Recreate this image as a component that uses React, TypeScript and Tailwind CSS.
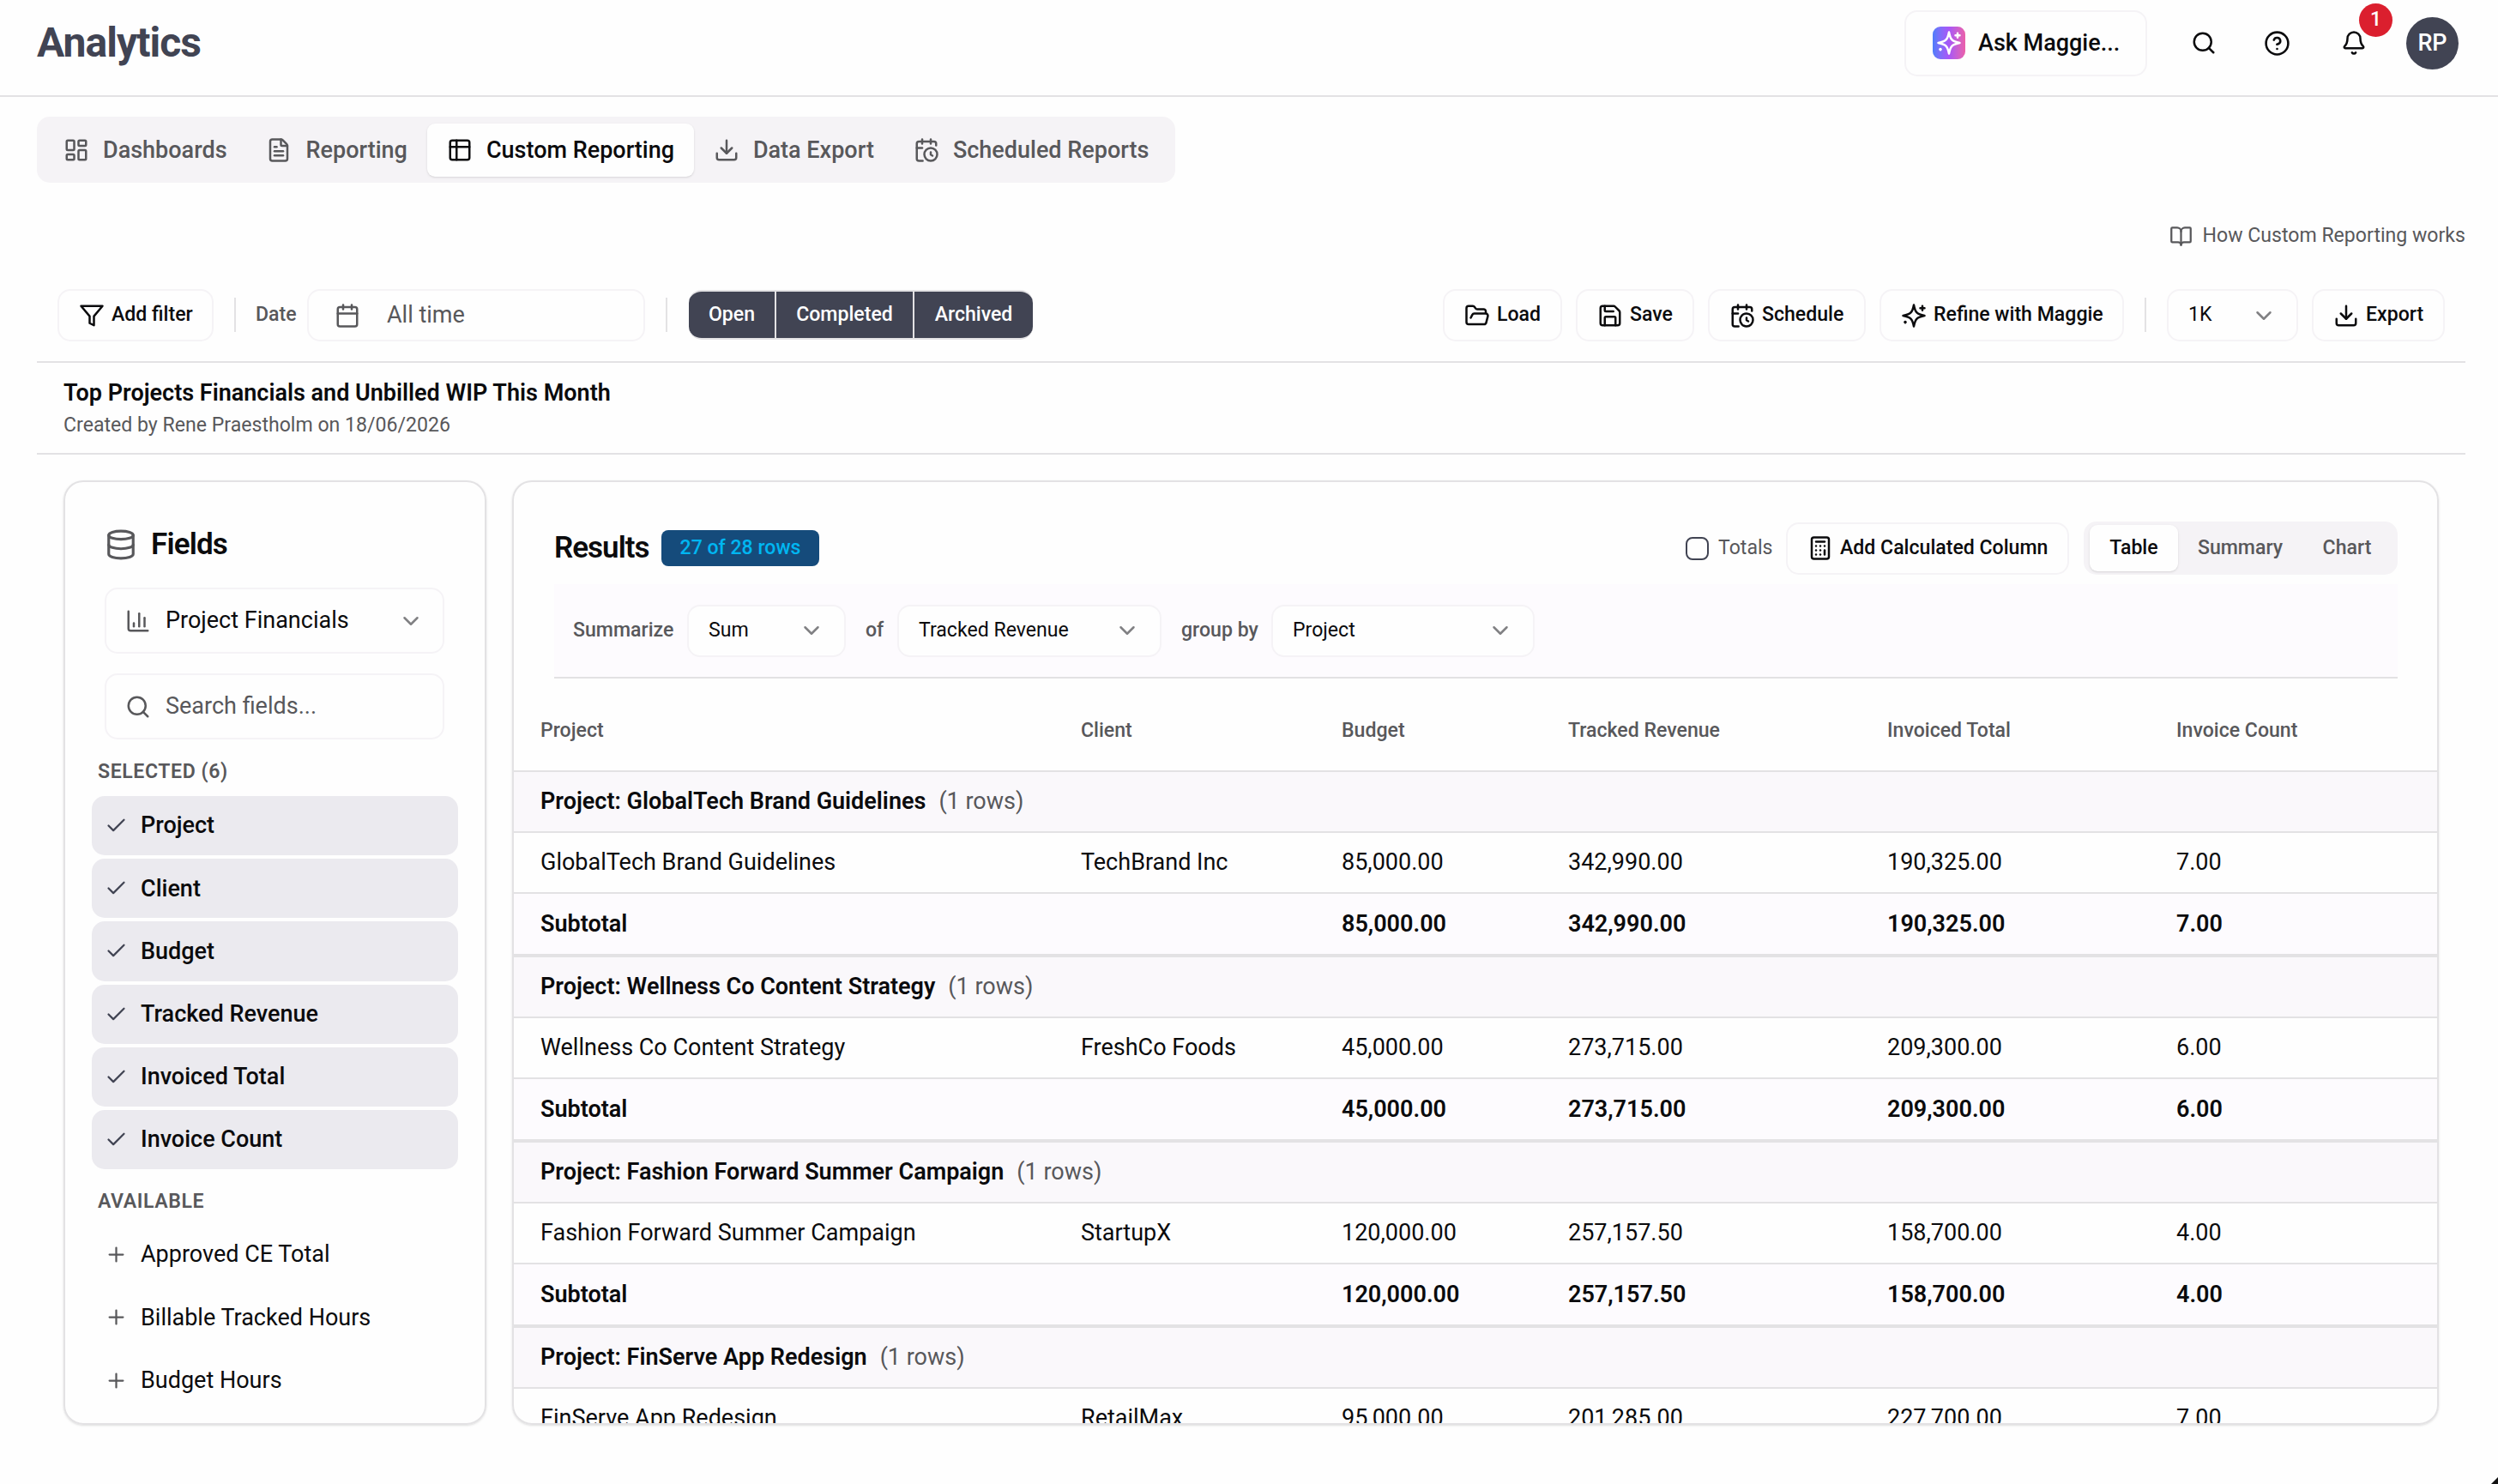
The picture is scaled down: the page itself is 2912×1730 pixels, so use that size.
import type { ReactNode } from "react"
import {
    Bell,
    BookOpen,
    Calculator,
    Calendar,
    CalendarClock,
    ChartColumn,
    Check,
    ChevronDown,
    CircleQuestionMark,
    Database,
    Download,
    FileText,
    FolderOpen,
    LayoutDashboard,
    Plus,
    Save,
    Search,
} from "lucide-react"
import clsx from "clsx"

const selectedFields = ["Project", "Client", "Budget", "Tracked Revenue", "Invoiced Total", "Invoice Count"]
const availableFields = ["Approved CE Total", "Billable Tracked Hours", "Budget Hours"]

const columns = ["Project", "Client", "Budget", "Tracked Revenue", "Invoiced Total", "Invoice Count"]

const groups = [
    { project: "GlobalTech Brand Guidelines", client: "TechBrand Inc", values: ["85,000.00", "342,990.00", "190,325.00", "7.00"] },
    { project: "Wellness Co Content Strategy", client: "FreshCo Foods", values: ["45,000.00", "273,715.00", "209,300.00", "6.00"] },
    { project: "Fashion Forward Summer Campaign", client: "StartupX", values: ["120,000.00", "257,157.50", "158,700.00", "4.00"] },
    { project: "FinServe App Redesign", client: "RetailMax", values: ["95,000.00", "201,285.00", "227,700.00", "7.00"] },
]

const rowGrid = "grid grid-cols-[630px_304px_264px_372px_337px_1fr] items-center pl-[31px]"

const TableIcon = ({ className }: { className?: string }) => (
    <svg viewBox="0 0 24 24" fill="none" stroke="currentColor" strokeWidth="2" strokeLinecap="round" strokeLinejoin="round" className={className}>
        <rect x="3" y="3" width="18" height="18" rx="2" />
        <path d="M3 9h18M9 3v18" />
    </svg>
)

const FunnelIcon = ({ className }: { className?: string }) => (
    <svg viewBox="0 0 24 24" fill="none" stroke="currentColor" strokeWidth="2" strokeLinecap="round" strokeLinejoin="round" className={className}>
        <path d="M22 3H2l8 9.46V19l4 2v-8.54z" />
    </svg>
)

const SparkIcon = ({ className }: { className?: string }) => (
    <svg viewBox="0 0 24 24" fill="none" stroke="currentColor" strokeWidth="2" strokeLinecap="round" strokeLinejoin="round" className={className}>
        <path d="M12 2c1.400 7.200 2.800 8.600 10 10-7.200 1.400-8.600 2.800-10 10-1.400-7.200-2.800-8.600-10-10 7.200-1.400 8.600-2.800 10-10z" />
        <path d="M20 3v4M22 5h-4M4 17.500v1M3.500 18h1" />
    </svg>
)

type ToolButtonProps = { icon: ReactNode; label: string; className: string }

const ToolButton = ({ icon, label, className }: ToolButtonProps) => (
    <button type="button" className={clsx("flex h-[61px] shrink-0 items-center gap-[8px] rounded-[15px] border-2 border-[#f5f3f6] pl-[23px] text-[23.1px] font-medium whitespace-nowrap text-[#0b0b0d]", className)}>
        {icon}
        {label}
    </button>
)

const Select = ({ label, className }: { label: string; className: string }) => (
    <button type="button" className={clsx("flex h-[61px] shrink-0 items-center justify-between rounded-[15px] border-2 border-[#f5f3f6] bg-[#fefefe] pr-[23px] pl-[23px] text-[23.1px] text-[#0b0b0d]", className)}>
        <span>{label}</span>
        <ChevronDown className="size-[30px] text-[#808083]" />
    </button>
)

const Header = () => (
    <header className="flex h-[113px] items-center border-b-2 border-[#e3e2e4] pr-[46px] pb-[11px] pl-[43px]">
        <h1 className="text-[48px] font-bold tracking-[-0.02em] text-[#414453]">Analytics</h1>
        <div className="ml-auto flex items-center">
            <button type="button" className="flex h-[77px] w-[283px] items-center rounded-[15px] border-2 border-[#f5f3f6] pl-[31px] text-[27px] font-medium text-[#0b0b0d]">
                <span className="mr-[15px] flex size-[38px] items-center justify-center rounded-[9px] bg-linear-to-r from-[#4c7dfb] via-[#a855f7] to-[#ec5fa8] text-white">
                    <SparkIcon className="size-[30px]" />
                </span>
                Ask Maggie...
            </button>
            <div className="ml-[28px] flex w-[75px] justify-center">
                <Search className="size-[30px] text-[#0b0b0d]" />
            </div>
            <div className="ml-[11px] flex w-[75px] justify-center">
                <CircleQuestionMark className="size-[31px] text-[#0b0b0d]" />
            </div>
            <div className="relative ml-[14px] flex w-[75px] justify-center">
                <Bell className="size-[30px] text-[#0b0b0d]" />
                <span className="absolute -top-[31px] left-[44px] flex size-[39px] items-center justify-center rounded-full bg-[#db1f2e] text-[23.1px] font-medium text-white">1</span>
            </div>
            <div className="ml-[24px] flex size-[61px] items-center justify-center rounded-full bg-[#414453] text-[27px] font-medium text-white">RP</div>
        </div>
    </header>
)

const Tabs = () => (
    <nav className="mt-[23px] ml-[43px] flex h-[77px] w-[1327px] items-center rounded-[15px] bg-[#f5f3f6] pt-px text-[27px] font-medium text-[#58585b]">
        <div className="ml-[31px] flex items-center gap-[16px]">
            <LayoutDashboard className="size-[30px]" />
            Dashboards
        </div>
        <div className="ml-[45px] flex items-center gap-[17px]">
            <FileText className="size-[30px]" />
            Reporting
        </div>
        <div className="ml-[23px] flex h-[62px] w-[311px] items-center gap-[16px] rounded-[9px] bg-[#fefefe] pl-[23px] text-[#0b0b0d] shadow-sm">
            <TableIcon className="size-[30px]" />
            Custom Reporting
        </div>
        <div className="ml-[23px] flex items-center gap-[16px]">
            <Download className="size-[30px]" />
            Data Export
        </div>
        <div className="ml-[46px] flex items-center gap-[16px]">
            <CalendarClock className="size-[30px]" />
            Scheduled Reports
        </div>
    </nav>
)

const Toolbar = () => (
    <div className="flex h-[86px] items-start border-b-2 border-[#e3e2e4] px-[24px]">
        <ToolButton className="w-[182px]" icon={<FunnelIcon className="size-[30px]" />} label="Add filter" />
        <div className="mt-[10px] ml-[24px] h-[40px] w-[2px] bg-[#e3e2e4]" />
        <div className="ml-[23px] flex h-[61px] w-[60px] items-center text-[23.1px] font-medium text-[#58585b]">Date</div>
        <div className="flex h-[61px] w-[394px] items-center rounded-[15px] border-2 border-[#f5f3f6] pl-[30px] text-[27px] text-[#58585b]">
            <Calendar className="mr-[31px] size-[30px]" />
            All time
        </div>
        <div className="mt-[10px] ml-[24px] h-[40px] w-[2px] bg-[#e3e2e4]" />
        <div className="mt-px ml-[25px] flex h-[58px] w-[401px] overflow-hidden rounded-[15px] border-y-2 border-[#e3e2e4] bg-[#414453] text-[23.1px] font-medium text-white">
            <div className="flex w-[102px] items-center justify-center border-r-2 border-[#e3e2e4]">Open</div>
            <div className="flex w-[161px] items-center justify-center border-r-2 border-[#e3e2e4]">Completed</div>
            <div className="flex flex-1 items-center justify-center">Archived</div>
        </div>
        <div className="ml-auto flex gap-[16px]">
            <ToolButton className="w-[139px]" icon={<FolderOpen className="size-[30px]" />} label="Load" />
            <ToolButton className="w-[138px]" icon={<Save className="size-[30px]" />} label="Save" />
            <ToolButton className="w-[184px]" icon={<CalendarClock className="size-[30px]" />} label="Schedule" />
            <ToolButton className="w-[285px]" icon={<SparkIcon className="size-[30px]" />} label="Refine with Maggie" />
            <div className="mx-[8px] mt-[10px] h-[40px] w-[2px] bg-[#e3e2e4]" />
            <Select className="w-[153px]" label="1K" />
            <ToolButton className="w-[155px]" icon={<Download className="size-[30px]" />} label="Export" />
        </div>
    </div>
)

const FieldsPanel = () => (
    <aside className="flex w-[493px] shrink-0 flex-col overflow-hidden rounded-[23px] border-2 border-[#e3e2e4] px-[31px] shadow-sm">
        <div className="mt-[48px] ml-[15px] flex h-[50px] shrink-0 items-center gap-[16px] text-[35px] font-semibold tracking-[-0.024em] text-[#0b0b0d]">
            <Database className="size-[38px] text-[#58585b]" />
            Fields
        </div>
        <div className="mt-[25px] ml-[15px] flex h-[77px] w-[396px] shrink-0 items-center rounded-[15px] border-2 border-[#f5f3f6] px-[22px] text-[27px] text-[#0b0b0d]">
            <ChartColumn className="mr-[17px] size-[30px] text-[#58585b]" />
            Project Financials
            <ChevronDown className="ml-auto size-[30px] text-[#808083]" />
        </div>
        <div className="mt-[23px] ml-[15px] flex h-[77px] w-[396px] shrink-0 items-center rounded-[15px] border-2 border-[#f5f3f6] px-[22px] text-[27px] text-[#58585b]">
            <Search className="mr-[17px] size-[30px]" />
            Search fields...
        </div>
        <div className="mt-[24px] ml-[7px] flex h-[28px] items-center text-[23.1px] font-semibold tracking-[0.025em] text-[#58585b]">SELECTED (6)</div>
        <div className="mt-[14px] flex flex-col gap-[4px]">
            {selectedFields.map((field) => (
                <div key={field} className="flex h-[69.200px] w-[427px] items-center gap-[15px] rounded-[15px] bg-[#ebeaef] pl-[15px] text-[27px] font-medium text-[#0b0b0d]">
                    <Check className="size-[27px] text-[#414453]" />
                    {field}
                </div>
            ))}
        </div>
        <div className="mt-[24px] ml-[7px] flex h-[28px] items-center text-[23.1px] font-semibold tracking-[0.025em] text-[#58585b]">AVAILABLE</div>
        <div className="mt-[13px] flex flex-col gap-[4px]">
            {availableFields.map((field) => (
                <div key={field} className="flex h-[69.200px] items-center gap-[15px] pl-[15px] text-[27px] text-[#0b0b0d]">
                    <Plus className="size-[27px] text-[#58585b]" />
                    {field}
                </div>
            ))}
        </div>
    </aside>
)

const ResultsPanel = () => (
    <section className="flex w-[2246px] shrink-0 flex-col overflow-hidden rounded-[23px] border-2 border-[#e3e2e4] shadow-sm">
        <div className="mt-[46px] flex h-[62px] shrink-0 items-center pr-[46px] pl-[47px]">
            <h2 className="w-[125px] text-[35px] font-semibold tracking-[-0.028em] text-[#0b0b0d]">Results</h2>
            <span className="flex h-[42px] w-[184px] items-center justify-center rounded-[8px] bg-[#154b7b] text-[23.1px] font-medium text-[#00b6f1]">27 of 28 rows</span>
            <div className="ml-auto flex items-center text-[23.1px]">
                <span className="size-[27px] rounded-[8px] border-2 border-[#414453]" />
                <span className="ml-[11px] w-[79px] text-[#58585b]">Totals</span>
                <ToolButton className="w-[330px]" icon={<Calculator className="size-[30px]" />} label="Add Calculated Column" />
                <div className="ml-[17px] flex h-[62px] w-[366px] items-center rounded-[15px] bg-[#f5f3f6] pl-[7px] font-medium text-[#58585b]">
                    <div className="flex h-[54px] w-[103px] items-center justify-center rounded-[9px] bg-[#fefefe] text-[#0b0b0d] shadow-sm">Table</div>
                    <div className="flex w-[145px] items-center justify-center">Summary</div>
                    <div className="flex w-[104px] items-center justify-center">Chart</div>
                </div>
            </div>
        </div>
        <div className="mt-[11px] mr-[46px] ml-[47px] flex h-[110px] shrink-0 items-center border-b-2 border-[#e3e2e4] bg-[#fdfbfe] pl-[22px] text-[23.1px] font-medium text-[#58585b]">
            <span className="w-[133px]">Summarize</span>
            <Select className="w-[185px] font-normal" label="Sum" />
            <span className="w-[60px] pl-[23px]">of</span>
            <Select className="w-[308px] font-normal" label="Tracked Revenue" />
            <span className="w-[128px] pl-[23px]">group by</span>
            <Select className="w-[307px] font-normal" label="Project" />
        </div>
        <div className={clsx(rowGrid, "h-[109px] shrink-0 border-b-2 border-[#e3e2e4] pt-[15px] text-[23.1px] font-medium text-[#58585b]")}>
            {columns.map((column) => (
                <span key={column}>{column}</span>
            ))}
        </div>
        {groups.map((group, i) => (
            <div key={group.project} className="shrink-0 text-[27px] text-[#0b0b0d]">
                <div className="flex h-[71px] items-center border-b-2 border-[#e3e2e4] bg-[#faf8fb] pl-[31px]">
                    <span className="font-semibold">Project: {group.project}</span>
                    <span className="ml-[15px] text-[#58585b]">(1 rows)</span>
                </div>
                <div className={clsx(rowGrid, "h-[71px] border-b-2 border-[#e3e2e4]")}>
                    <span>{group.project}</span>
                    <span>{group.client}</span>
                    {group.values.map((value) => (
                        <span key={value}>{value}</span>
                    ))}
                </div>
                {/* the last subtotal falls below the fold of the panel */}
                {i < groups.length - 1 && (
                    <div className={clsx(rowGrid, "h-[74px] border-b-4 border-[#e3e2e4] bg-[#fdfbfe] font-semibold")}>
                        <span>Subtotal</span>
                        <span />
                        {group.values.map((value) => (
                            <span key={value}>{value}</span>
                        ))}
                    </div>
                )}
            </div>
        ))}
    </section>
)

const App = () => {
    return (
        <div className="relative h-[1730px] w-[2912px] overflow-hidden bg-[#fefefe] font-[Roboto,sans-serif]">
            <Header />
            <Tabs />
            <main className="mr-[38px] ml-[43px]">
                <div className="mt-[47px] mb-[47px] flex h-[30px] items-center justify-end gap-[12px] text-[23.1px] text-[#58585b]">
                    <BookOpen className="size-[27px]" />
                    How Custom Reporting works
                </div>
                <Toolbar />
                <div className="flex h-[107px] flex-col border-b-2 border-[#e3e2e4] pt-[16px] pl-[31px]">
                    <div className="text-[27px] leading-[38px] font-semibold text-[#0b0b0d]">Top Projects Financials and Unbilled WIP This Month</div>
                    <div className="text-[23.1px] leading-[38px] text-[#58585b]">Created by Rene Praestholm on 18/06/2026</div>
                </div>
                <div className="mt-[30px] flex h-[1101px] gap-[30px] pl-[31px]">
                    <FieldsPanel />
                    <ResultsPanel />
                </div>
            </main>
            {/* window corner */}
            <div className="absolute right-0 bottom-0 size-[8px] bg-[#111111] [clip-path:polygon(100%_0,100%_100%,0_100%)]" />
        </div>
    )
}

export default App
